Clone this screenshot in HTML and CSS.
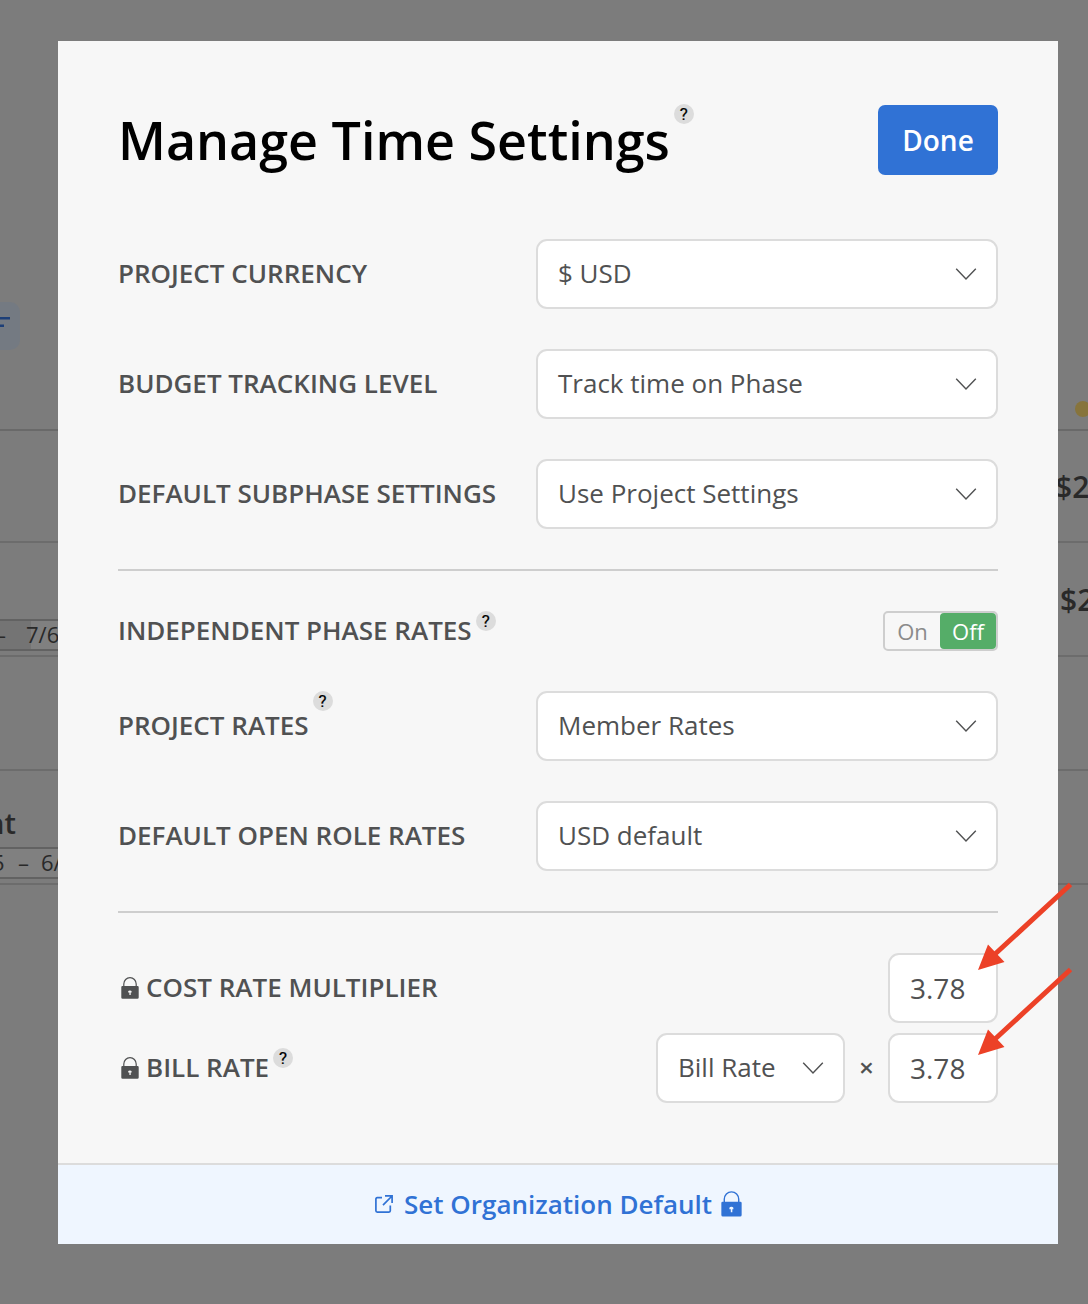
FILE: index.html
```html
<!DOCTYPE html>
<html lang="en">
<head>
<meta charset="utf-8">
<title>Manage Time Settings</title>
<link rel="stylesheet" href="styles.css">
</head>
<body>
<svg class="defs" width="0" height="0">
  <symbol id="chevron" viewBox="0 0 22 14"><path d="M1.2 1.8 11 12 20.8 1.8" fill="none" stroke="currentColor" stroke-width="1.4"/></symbol>
  <symbol id="lock" viewBox="0 0 18 22"><path d="M2.8 10V7a6.2 6.4 0 0 1 12.4 0v3" fill="none" stroke="currentColor" stroke-width="1.2"/><path fill="currentColor" fill-rule="evenodd" d="M1.4 9h15.2q1.1 0 1.1 1.2v10.3q0 1.3-1.3 1.3H1.6q-1.3 0-1.3-1.3V10.200Q.3 9 1.4 9ZM7.200 14.200v1.200h1.200v2.600h1.300v-2.600h.9v-1.200a1.750 1 0 0 0-3.400 0Z"/></symbol>
</svg>
<div class="page">
  <div class="tools"><div class="chip"><svg width="11" height="12"><path d="M0 2.300h10M0 9.800h4" stroke="#1d3f78" stroke-width="2.400"/></svg></div><i class="dot"></i></div>
  <div class="line first"><b class="amount wide">$2</b></div>
  <div class="line"><div class="dates partial"><span class="dash">–</span><span class="day">7/6</span></div><b class="amount">$2</b></div>
  <div class="line"></div>
  <div class="line"><div class="phase"><b class="name">nt</b><div class="dates"><span class="end">5</span><span class="mid">–</span><span>6/6</span></div></div></div>
</div>
<main class="modal">
  <div class="content">
    <header class="header"><h1>Manage Time Settings</h1><span class="help">?</span><button class="done">Done</button></header>
    <div class="field"><span class="label">PROJECT CURRENCY</span><div class="select"><span>$ USD</span><svg class="chevron"><use href="#chevron"/></svg></div></div>
    <div class="field"><span class="label">BUDGET TRACKING LEVEL</span><div class="select"><span>Track time on Phase</span><svg class="chevron"><use href="#chevron"/></svg></div></div>
    <div class="field"><span class="label">DEFAULT SUBPHASE SETTINGS</span><div class="select"><span>Use Project Settings</span><svg class="chevron"><use href="#chevron"/></svg></div></div>
    <hr>
    <div class="field short"><span class="label">INDEPENDENT PHASE RATES</span><span class="help">?</span><div class="toggle"><span>On</span><span class="on">Off</span></div></div>
    <div class="field"><span class="label">PROJECT RATES</span><span class="help">?</span><div class="select"><span>Member Rates</span><svg class="chevron"><use href="#chevron"/></svg></div></div>
    <div class="field"><span class="label">DEFAULT OPEN ROLE RATES</span><div class="select"><span>USD default</span><svg class="chevron"><use href="#chevron"/></svg></div></div>
    <hr>
    <div class="rates">
      <div class="field"><svg class="lock"><use href="#lock"/></svg><span class="label">COST RATE MULTIPLIER</span><div class="number">3.78</div></div>
      <div class="field"><svg class="lock"><use href="#lock"/></svg><span class="label">BILL RATE</span><span class="help low">?</span><div class="select small"><span>Bill Rate</span><svg class="chevron"><use href="#chevron"/></svg></div><span class="times">×</span><div class="number">3.78</div></div>
    </div>
  </div>
  <footer class="footer">
    <svg class="external" viewBox="0 0 18 18" fill="none" stroke="currentColor" stroke-width="1.700"><path d="M7 2.700H2.200Q.9 2.700.9 4v11.800q0 1.300 1.300 1.300H14q1.300 0 1.300-1.300V10.500M10 .9h7.100V8M17 1 8 10.200"/></svg>
    <span>Set Organization Default</span>
    <svg class="lock big"><use href="#lock"/></svg>
  </footer>
</main>
<svg class="arrows" width="96" height="174" viewBox="0 0 96 174" fill="#ec4127" stroke="#ec4127">
  <path d="M93.500 2.500 17 73M93.500 87.500 17 158" stroke-width="5"/>
  <path d="M1 88 11 62.500 27.500 80ZM1 173 11 147.500 27.500 165Z" stroke="none"/>
</svg>
</body>
</html>
```

FILE: styles.css
```css
* { box-sizing: border-box; }
body { margin: 0; position: relative; width: 1088px; height: 1304px; overflow: hidden; background: #7c7c7c; font-family: "Open Sans", sans-serif; color: #505152; }
.defs { position: absolute; }

/* dimmed page behind the dialog */
.page { position: absolute; inset: 0; overflow: hidden; color: #292929; }
.tools { height: 431px; border-bottom: 2px solid #696969; display: flex; justify-content: space-between; padding-top: 302px; }
.chip { width: 20px; height: 48px; padding-top: 14px; background: #747a82; border-radius: 0 10px 10px 0; }
.chip svg { display: block; }
.dot { width: 16px; height: 16px; margin: 99px -3px 0 0; border-radius: 50%; background: #87743c; }
.line { height: 114px; border-bottom: 2px solid #6c6c6c; display: flex; align-items: flex-start; }
.line.first { height: 112px; }
.amount { margin: 36px -10px 0 auto; width: 38px; font-size: 30px; line-height: 42px; font-weight: 600; white-space: nowrap; }
.amount.wide { width: 43px; margin-top: 35px; }
.dates { width: 110px; height: 32px; border: solid #626262; border-width: 2px 0; background: #808080; display: flex; font-size: 22px; line-height: 28px; white-space: nowrap; }
.dates.partial { margin-top: 76px; background: linear-gradient(90deg, #747474 31px, #808080 31px); line-height: 26px; }
.dash { width: 26px; margin-left: -5px; }
.day { margin-left: 5px; }
.end { margin-left: -8px; width: 26px; }
.mid { width: 23px; }
.phase .dates { line-height: 26px; }
.name { display: block; height: 76px; padding-top: 31px; margin-left: -14px; font-size: 29px; line-height: 42px; font-weight: 600; }

.modal { position: absolute; left: 58px; top: 41px; width: 1000px; height: 1203px; display: flex; flex-direction: column; background: #f7f7f7; }
.content { flex: 1; padding: 64px 60px 60px; display: flex; flex-direction: column; gap: 40px; }
.header { display: flex; align-items: center; height: 70px; margin-bottom: 24px; }
h1 { margin: 0; font-size: 52px; line-height: 70px; font-weight: 600; color: #000; white-space: nowrap; }
.help { flex: none; align-self: flex-start; width: 20px; height: 20px; margin-left: 4px; border-radius: 50%; background: #dcdcdc; color: #000; font: 400 17px/20px Roboto, sans-serif; -webkit-text-stroke: .2px #000; text-align: center; }
.help.low { margin-top: 15px; }
.header .help { margin-top: -1px; }
.done { margin-left: auto; width: 120px; height: 70px; border: 0; padding: 0; border-radius: 7px; background: #3072d5; color: #fff; font: 600 28px/70px "Open Sans", sans-serif; }
.field { display: flex; align-items: center; height: 70px; }
.field.short { height: 40px; }
.label { padding-bottom: 2px; font-size: 26px; line-height: 36px; font-weight: 600; white-space: nowrap; }
.select { margin-left: auto; width: 462px; height: 70px; padding: 0 19px 0 20px; display: flex; align-items: center; justify-content: space-between; border: 2px solid #dcdcdc; border-radius: 11px; background: #fff; font-size: 26px; white-space: nowrap; }
.select span { padding-bottom: 2px; line-height: 36px; }
.select.small { width: 189px; }
.chevron { width: 22px; height: 14px; }
hr { width: 100%; height: 2px; margin: 0; border: 0; background: #cecece; }
.toggle { margin-left: auto; width: 115px; height: 40px; display: flex; border: 2px solid #cecece; border-radius: 5px; font-size: 22px; line-height: 36px; text-align: center; color: #8b8b8b; }
.toggle span { width: 55px; }
.toggle .on { width: 56px; height: 36px; border-radius: 4px; background: #55ad68; color: #fff; }
.rates { display: flex; flex-direction: column; gap: 10px; }
.lock { width: 18px; height: 22px; margin: 0 7px 0 3px; }
.number { width: 110px; height: 70px; margin-left: auto; padding-left: 20px; border: 2px solid #dcdcdc; border-radius: 11px; background: #fff; font-size: 28px; line-height: 66px; }
.times { width: 43px; padding-bottom: 2px; line-height: 36px; text-align: center; font-size: 26px; font-weight: 600; }
.times + .number { margin-left: 0; }
.footer { height: 81px; padding: 0 0 2px 1px; border-top: 2px solid #dcdcdc; background: #eff6ff; display: flex; align-items: center; justify-content: center; color: #3072d5; font-size: 26px; font-weight: 600; white-space: nowrap; }
.external { width: 18px; height: 18px; margin-right: 11px; }
.lock.big { width: 21px; height: 26px; margin: 0 0 0 9px; }
.arrows { position: absolute; left: 977px; top: 882px; }
```
